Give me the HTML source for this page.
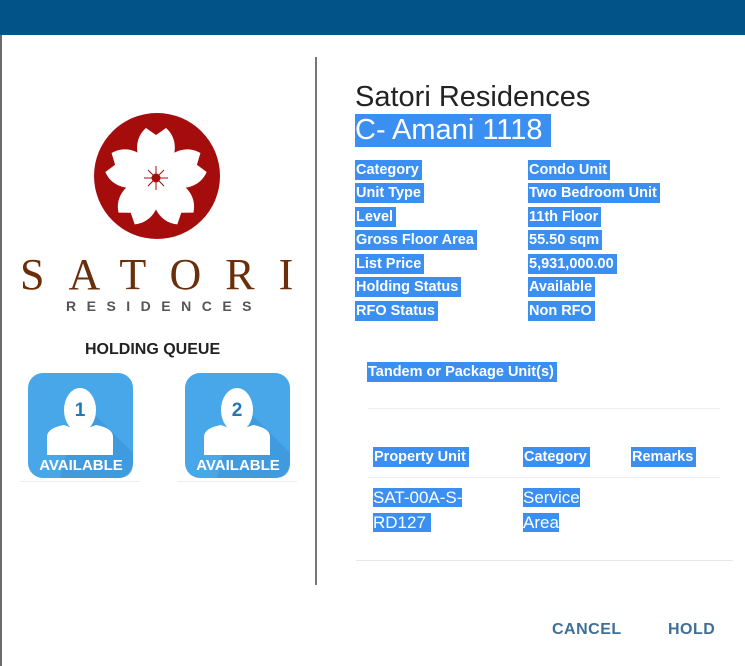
<!DOCTYPE html>
<html><head><style>
body{margin:0;width:745px;height:666px;background:#fff;position:relative;overflow:hidden;font-family:"Liberation Sans",Arial,sans-serif}
.a{position:absolute}
.h{background:#3b8ff0;color:#fff;font-weight:bold;font-size:14.5px;line-height:20px;padding:0 3px 0 1px}
.r{position:absolute;left:355px}
.v{position:absolute;left:528px}
.btn{position:absolute;top:621px;font-weight:bold;font-size:16px;color:#3f6f96;letter-spacing:0.5px}
</style></head><body>
<div class="a" style="left:0;top:0;width:745px;height:35px;background:#025387"></div>
<div class="a" style="left:0;top:35px;width:2px;height:631px;background:#6a6a6a"></div>
<div class="a" style="left:315px;top:57px;width:2px;height:528px;background:#777"></div>

<svg class="a" style="left:90px;top:108px" width="140" height="140" viewBox="0 0 140 140">
<circle cx="67" cy="68" r="63" fill="#a50d0d"/>
<g fill="#fff" transform="translate(66,70)">
<g id="p"><path d="M0 0 C-22 -14 -24 -38 -10 -50 L0 -43 L10 -50 C24 -38 22 -14 0 0Z"/></g>
<use href="#p" transform="rotate(72)"/><use href="#p" transform="rotate(144)"/><use href="#p" transform="rotate(216)"/><use href="#p" transform="rotate(288)"/>
<circle r="17"/>
</g>
<g stroke="#a50d0d" stroke-width="1" transform="translate(66,70)">
<path d="M-12 0H12M0 -12V12M-8 -8L8 8M8 -8L-8 8"/><circle r="4" fill="#a50d0d"/>
</g>
</svg>
<div class="a" style="left:20px;top:249px;font-family:'Liberation Serif',serif;font-size:44px;color:#6b2e0a;letter-spacing:24px;white-space:nowrap">SATORI</div>
<div class="a" style="left:66px;top:298px;font-size:14px;font-weight:bold;color:#555;letter-spacing:10.5px;white-space:nowrap">RESIDENCES</div>
<div class="a" style="left:85px;top:341px;font-size:16px;font-weight:bold;color:#222">HOLDING QUEUE</div>

<svg class="a" style="left:20px;top:370px" width="280" height="115">
<defs><g id="ic">
<rect x="8" y="3" width="105" height="105" rx="15" fill="#48a7e8"/>
<path d="M60 30 L113 83 L113 93 Q113 108 98 108 L40 108 Z" fill="#3a93d6" opacity="0.6"/>
<ellipse cx="60" cy="40" rx="16" ry="22" fill="#fff"/>
<path d="M27 85 L27 67 Q27 58 44 55 L60 61 L76 55 Q93 58 93 67 L93 85 Z" fill="#fff"/>
</g></defs>
<use href="#ic"/><use href="#ic" x="157"/>
<text x="60" y="46" font-size="19" font-weight="bold" fill="#2077b4" text-anchor="middle" font-family="Liberation Sans">1</text>
<text x="217" y="46" font-size="19" font-weight="bold" fill="#2077b4" text-anchor="middle" font-family="Liberation Sans">2</text>
<text x="61" y="100" font-size="15" font-weight="bold" fill="#fff" text-anchor="middle" font-family="Liberation Sans">AVAILABLE</text>
<text x="218" y="100" font-size="15" font-weight="bold" fill="#fff" text-anchor="middle" font-family="Liberation Sans">AVAILABLE</text>
<rect x="0" y="111" width="120" height="1" fill="#eee"/><rect x="157" y="111" width="120" height="1" fill="#eee"/>
</svg>

<div class="a" style="left:355px;top:81px;font-size:29px;color:#222">Satori Residences</div>
<div class="a" style="left:355px;top:114px;font-size:29px;color:#fff;background:#3b8ff0;padding:0 8px 0 0;line-height:33px">C- Amani 1118</div>

<div class="r h" style="top:160px">Category</div><div class="v h" style="top:160px">Condo Unit</div>
<div class="r h" style="top:183px">Unit Type</div><div class="v h" style="top:183px">Two Bedroom Unit</div>
<div class="r h" style="top:207px">Level</div><div class="v h" style="top:207px">11th Floor</div>
<div class="r h" style="top:230px">Gross Floor Area</div><div class="v h" style="top:230px">55.50 sqm</div>
<div class="r h" style="top:254px">List Price</div><div class="v h" style="top:254px">5,931,000.00</div>
<div class="r h" style="top:277px">Holding Status</div><div class="v h" style="top:277px">Available</div>
<div class="r h" style="top:301px">RFO Status</div><div class="v h" style="top:301px">Non RFO</div>

<div class="a h" style="left:367px;top:362px">Tandem or Package Unit(s)</div>
<div class="a" style="left:368px;top:408px;width:352px;height:1px;background:#eee"></div>
<div class="a h" style="left:373px;top:447px">Property Unit</div>
<div class="a h" style="left:523px;top:447px">Category</div>
<div class="a h" style="left:631px;top:447px">Remarks</div>
<div class="a" style="left:368px;top:477px;width:352px;height:1px;background:#eee"></div>
<div class="a" style="left:373px;top:485px;font-size:17px;line-height:25px;color:#fff"><span style="background:#3b8ff0">SAT-00A-S-</span><br><span style="background:#3b8ff0">RD127&nbsp;</span></div>
<div class="a" style="left:523px;top:485px;font-size:17px;line-height:25px;color:#fff"><span style="background:#3b8ff0">Service</span><br><span style="background:#3b8ff0">Area</span></div>
<div class="a" style="left:356px;top:560px;width:377px;height:1px;background:#e6e6e6"></div>

<div class="btn" style="left:552px">CANCEL</div>
<div class="btn" style="left:668px">HOLD</div>
</body></html>
